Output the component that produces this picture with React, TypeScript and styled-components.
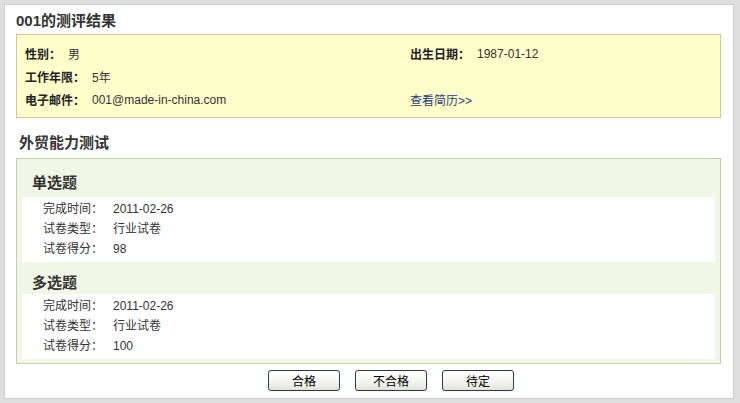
import styled, { createGlobalStyle } from "styled-components";

const GlobalStyle = createGlobalStyle`
    html, body {
        margin: 0;
        padding: 0;
        background: #dedede;
    }

    body {
        font-family: "Liberation Sans", "Noto Sans CJK SC", sans-serif;
        font-size: 12px;
        color: #333;
    }
`

const Frame = styled.div`
    width: 740px;
    height: 403px;
    box-sizing: border-box;
    padding: 4px 6px 4px 4px;
`

const Panel = styled.div`
    height: 395px;
    box-sizing: border-box;
    background: #fff;
    border: 1px solid #d0d0d0;
    padding: 3px 12px 0 11px;
    overflow: hidden;
`

const Title = styled.h1`
    margin: 0;
    font-size: 15px;
    line-height: 26px;
    font-weight: bold;
    color: #333;
`

const InfoBox = styled.div`
    display: grid;
    grid-template-columns: 385px 1fr;
    grid-auto-rows: 23px;
    align-items: center;
    background: #ffffcc;
    border: 1px solid #cccc99;
    padding: 7px 0 6px 8px;
`

const InfoItem = styled.div`
    display: flex;
    align-items: center;
    color: #333;
`

const InfoLabel = styled.b`
    font-weight: bold;
    color: #222;
    margin-right: 7px;
`

const ResumeLink = styled.a`
    color: #1f3d78;
    text-decoration: none;
    cursor: pointer;
`

const SectionTitle = styled.h2`
    margin: 0;
    padding: 12px 0 2px 3px;
    font-size: 15px;
    line-height: 26px;
    font-weight: bold;
    color: #333;
`

const TestBox = styled.div`
    background: #f0f7e6;
    border: 1px solid #c4ceb0;
    padding: 3px 5px 4px;
`

const QuizTitle = styled.h3<{ $gap?: number }>`
    margin: 0 0 ${p => p.$gap ?? 0}px;
    padding: 10px 0 0 10px;
    height: 32px;
    box-sizing: border-box;
    font-size: 15px;
    line-height: 22px;
    font-weight: bold;
    color: #333;
`

const QuizBody = styled.div`
    background: #fff;
    padding: 2px 0 3px 21px;
`

const QuizRow = styled.div`
    display: flex;
    line-height: 20px;
    color: #333;
`

const QuizLabel = styled.span`
    width: 70px;
`

const Actions = styled.div`
    display: flex;
    justify-content: center;
    gap: 15px;
    margin-top: 6px;
    padding-left: 45px;
`

const ActionButton = styled.button`
    width: 72px;
    height: 21px;
    padding: 0;
    border: 1px solid #2b3b4c;
    border-radius: 3px;
    background: linear-gradient(#ffffff, #f4f4ef 60%, #e4e3da);
    font-family: "Liberation Sans", "Noto Sans CJK SC", sans-serif;
    font-size: 12px;
    color: #000;
    cursor: pointer;
`

const quizzes = [
    { name: '单选题', date: '2011-02-26', type: '行业试卷', score: '98' },
    { name: '多选题', date: '2011-02-26', type: '行业试卷', score: '100' },
]

function App() {
    return (
        <Frame>
            <GlobalStyle/>
            <Panel>
                <Title>001的测评结果</Title>
                <InfoBox>
                    <InfoItem><InfoLabel>性别：</InfoLabel>男</InfoItem>
                    <InfoItem><InfoLabel>出生日期：</InfoLabel>1987-01-12</InfoItem>
                    <InfoItem><InfoLabel>工作年限：</InfoLabel>5年</InfoItem>
                    <InfoItem/>
                    <InfoItem><InfoLabel>电子邮件：</InfoLabel>001@made-in-china.com</InfoItem>
                    <InfoItem><ResumeLink>查看简历&gt;&gt;</ResumeLink></InfoItem>
                </InfoBox>

                <SectionTitle>外贸能力测试</SectionTitle>
                <TestBox>
                    {quizzes.map((q, i) => (
                        <div key={q.name}>
                            <QuizTitle $gap={i === 0 ? 3 : 0}>{q.name}</QuizTitle>
                            <QuizBody>
                                <QuizRow><QuizLabel>完成时间：</QuizLabel>{q.date}</QuizRow>
                                <QuizRow><QuizLabel>试卷类型：</QuizLabel>{q.type}</QuizRow>
                                <QuizRow><QuizLabel>试卷得分：</QuizLabel>{q.score}</QuizRow>
                            </QuizBody>
                        </div>
                    ))}
                </TestBox>

                <Actions>
                    <ActionButton>合格</ActionButton>
                    <ActionButton>不合格</ActionButton>
                    <ActionButton>待定</ActionButton>
                </Actions>
            </Panel>
        </Frame>
    )
}

export default App
